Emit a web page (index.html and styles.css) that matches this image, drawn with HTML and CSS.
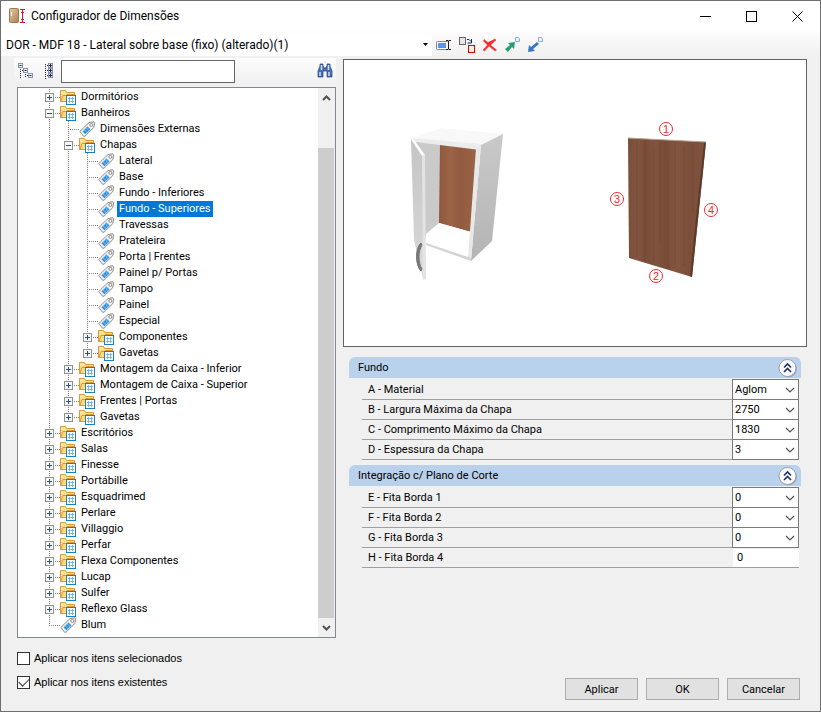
FILE: index.html
```html
<!DOCTYPE html>
<html lang="pt-BR">
<head>
    <meta charset="UTF-8">
    <meta name="viewport" content="width=device-width, initial-scale=1.0">
    <title>Configurador de Dimensões</title>
    <link rel="stylesheet" href="styles.css">
</head>
<body>
    <!-- shared icons -->
    <svg class="sprite" aria-hidden="true">
        <defs>
            <linearGradient id="folderFill" x1="0" y1="0" x2="0" y2="1">
                <stop offset="0" stop-color="#ffe9a8"/>
                <stop offset="1" stop-color="#f6c860"/>
            </linearGradient>
            <linearGradient id="panelFill" x1="0" y1="0" x2="1" y2="1">
                <stop offset="0" stop-color="#e6c9a2"/>
                <stop offset="1" stop-color="#a98256"/>
            </linearGradient>
        </defs>
        <symbol id="folder" viewBox="0 0 17 16">
            <path d="M.5 12.5v-11h5l1 2h8v9z" fill="url(#folderFill)" stroke="#d9993a"/>
            <path d="M1 12.5l2-6h3l1-1h8v7z" fill="#fddc86" stroke="#d9993a"/>
            <rect x="6.5" y="6.5" width="9" height="9" fill="#fff" stroke="#1b7fc0"/>
            <path d="M8 9.5h6M8 12.5h6M9.5 8v6M12.500 8v6" stroke="#7db9e2"/>
        </symbol>
        <symbol id="tag" viewBox="0 0 17 16">
            <path d="M.8 10.500L10 1.500l5-.7.7.8-.8 4.800L6 15.200H4.500z" fill="#f1f1f1" stroke="#8b8b8b"/>
            <path d="M3.500 10.500l5-5 3 3-5 4.800z" fill="#2f93dc"/>
            <path d="M5.500 9l3 3M7.500 7l3 3" stroke="#b9def8" stroke-width=".6"/>
            <circle cx="12.300" cy="3.900" r="1.500" fill="#fff" stroke="#8b8b8b"/>
        </symbol>
        <symbol id="plus" viewBox="0 0 9 9">
            <rect x=".5" y=".5" width="8" height="8" fill="#f8f8f8" stroke="#919191"/>
            <path d="M2 4.500h5M4.500 2v5" stroke="#2b4a9b"/>
        </symbol>
        <symbol id="minus" viewBox="0 0 9 9">
            <rect x=".5" y=".5" width="8" height="8" fill="#f8f8f8" stroke="#919191"/>
            <path d="M2 4.500h5" stroke="#2b4a9b"/>
        </symbol>
        <symbol id="chevron" viewBox="0 0 10 6">
            <path d="M1 1l4 4 4-4" fill="none" stroke="#555" stroke-width="1.200"/>
        </symbol>
        <symbol id="collapse" viewBox="0 0 20 20">
            <circle cx="10.500" cy="11" r="8.500" fill="#8b9ab2" opacity=".7"/>
            <circle cx="9.500" cy="10" r="8.500" fill="#fafafa" stroke="#98a2b5"/>
            <path d="M6 9.500L9.500 6 13 9.500M6 14l3.500-3.500L13 14" fill="none" stroke="#1f3364" stroke-width="1.600"/>
        </symbol>
    </svg>

    <div class="window">
        <header class="titlebar">
            <svg class="app-icon" viewBox="0 0 17 16">
                <rect x=".5" y=".5" width="9" height="14" rx="1" fill="url(#panelFill)" stroke="#9a7850"/>
                <path d="M2.500 4v4" stroke="#fff"/>
                <path d="M11 1.500h5M11 14.500h5M13.500 2v12M12 4.500h3M12 11.500h3" stroke="#dc143c" fill="none"/>
            </svg>
            <h1>Configurador de Dimensões</h1>
            <button class="win-btn" aria-label="Minimizar"><svg viewBox="0 0 11 11"><path d="M0 5.500h11"/></svg></button>
            <button class="win-btn" aria-label="Maximizar"><svg viewBox="0 0 11 11"><rect x=".5" y=".5" width="10" height="10"/></svg></button>
            <button class="win-btn" aria-label="Fechar"><svg viewBox="0 0 11 11"><path d="M.5.5l10 10M10.500.5l-10 10"/></svg></button>
        </header>

        <div class="toolbar">
            <div class="combo preset">
                <select aria-label="Configuração">
                    <option>DOR - MDF 18 - Lateral sobre base (fixo) (alterado)(1)</option>
                </select>
                <svg viewBox="0 0 5 3"><path d="M0 0h5L2.500 3z"/></svg>
            </div>
            <button class="tool" aria-label="Renomear">
                <svg viewBox="0 0 16 16">
                    <rect x=".5" y="4.500" width="12" height="8" rx="1" fill="#fff" stroke="#7387ad"/>
                    <rect x="2" y="6" width="8" height="5" fill="#5a94ea"/>
                    <path d="M10 3.500h2l.5.5.5-.5h2M10 12.500h2l.5-.5.5.5h2M12.500 4v8" fill="none" stroke="#222"/>
                </svg>
            </button>
            <button class="tool" aria-label="Substituir">
                <svg viewBox="0 0 16 16">
                    <rect x=".5" y=".5" width="6" height="7" fill="#e6e6e6" stroke="#6d5f66"/>
                    <path d="M8 2.500h2l2 2M12.500 2v4h-4" fill="none" stroke="#10246b"/>
                    <rect x="9.500" y="8.500" width="6" height="7" fill="#eee" stroke="#e00000"/>
                </svg>
            </button>
            <button class="tool" aria-label="Excluir">
                <svg viewBox="0 0 16 16"><path d="M2 2.500l4 3L13 2l1 1-5.500 5 6 5-1.500 1-6-5-4.500 5-1.500-1L5.500 8 1.500 4z" fill="#f62c2c" stroke="#f62c2c" stroke-width=".5"/></svg>
            </button>
            <button class="tool" aria-label="Exportar">
                <svg viewBox="0 0 16 16">
                    <path d="M0 12l5-4-2-2 7-1-1 7-2-2-4 5z" fill="#27a071"/>
                    <path d="M10.500.5h3l1 1v3h-4z" fill="#e9f2fb" stroke="#88aedb"/>
                </svg>
            </button>
            <button class="tool" aria-label="Importar">
                <svg viewBox="0 0 16 16">
                    <path d="M0 15l1-7 2 2 6-5 2 2-6 5 2 2z" fill="#3478c9"/>
                    <path d="M10.500.5h3l1 1v3h-4z" fill="#e9f2fb" stroke="#88aedb"/>
                </svg>
            </button>
        </div>

        <main class="main">
            <section class="browser">
                <div class="search-bar">
                    <button class="tool" aria-label="Recolher tudo">
                        <svg viewBox="0 0 16 16">
                            <path d="M2.500 4v12M7.500 9v6M4 7.500h2M9 12.500h2" stroke="#222" stroke-dasharray="1 1"/>
                            <g fill="#f4f4f4" stroke="#8294b1"><rect x=".5" y=".5" width="4" height="4"/><rect x="5.500" y="5.500" width="4" height="4"/><rect x="10.500" y="10.500" width="4" height="4"/></g>
                            <path d="M1.500 2.500h2M6.500 7.500h2M11.500 12.500h2" stroke="#222"/>
                        </svg>
                    </button>
                    <button class="tool" aria-label="Expandir tudo">
                        <svg viewBox="0 0 16 16">
                            <path d="M4.500 1v15M6 2.500h2M6 7.500h2M6 12.500h2" stroke="#222" stroke-dasharray="1 1"/>
                            <g fill="#f4f4f4" stroke="#8294b1"><rect x="7.500" y=".5" width="4" height="4"/><rect x="7.500" y="5.500" width="4" height="4"/><rect x="7.500" y="10.500" width="4" height="4"/></g>
                            <path d="M8 2.500h3M9.500 1v3M8 7.500h3M9.500 6v3M8 12.500h3M9.500 11v3" stroke="#222"/>
                        </svg>
                    </button>
                    <input type="text" class="search" aria-label="Pesquisar">
                    <button class="tool find" aria-label="Localizar">
                        <svg viewBox="0 0 16 16">
                            <path d="M3 1h3v2l1 1v1h2V4l1-1V1h3v2l2 5v6h-5V8H6v6H1V8l2-5z" fill="#456fae" stroke="#254477" stroke-width=".7"/>
                            <path d="M3 9v4M12 9v4M4.500 2v5M11.500 2v5" stroke="#c8dcf5" stroke-width="1.500"/>
                        </svg>
                    </button>
                </div>

                <div class="tree-box">
                    <ul class="tree">
                        <li><div class="row"><svg class="toggle"><use href="#plus"/></svg><svg class="icon"><use href="#folder"/></svg><span>Dormitórios</span></div></li>
                        <li>
                            <div class="row"><svg class="toggle"><use href="#minus"/></svg><svg class="icon"><use href="#folder"/></svg><span>Banheiros</span></div>
                            <ul>
                                <li><div class="row leaf"><svg class="icon"><use href="#tag"/></svg><span>Dimensões Externas</span></div></li>
                                <li>
                                    <div class="row"><svg class="toggle"><use href="#minus"/></svg><svg class="icon"><use href="#folder"/></svg><span>Chapas</span></div>
                                    <ul>
                                        <li><div class="row leaf"><svg class="icon"><use href="#tag"/></svg><span>Lateral</span></div></li>
                                        <li><div class="row leaf"><svg class="icon"><use href="#tag"/></svg><span>Base</span></div></li>
                                        <li><div class="row leaf"><svg class="icon"><use href="#tag"/></svg><span>Fundo - Inferiores</span></div></li>
                                        <li><div class="row leaf"><svg class="icon"><use href="#tag"/></svg><span class="selected">Fundo - Superiores</span></div></li>
                                        <li><div class="row leaf"><svg class="icon"><use href="#tag"/></svg><span>Travessas</span></div></li>
                                        <li><div class="row leaf"><svg class="icon"><use href="#tag"/></svg><span>Prateleira</span></div></li>
                                        <li><div class="row leaf"><svg class="icon"><use href="#tag"/></svg><span>Porta | Frentes</span></div></li>
                                        <li><div class="row leaf"><svg class="icon"><use href="#tag"/></svg><span>Painel p/ Portas</span></div></li>
                                        <li><div class="row leaf"><svg class="icon"><use href="#tag"/></svg><span>Tampo</span></div></li>
                                        <li><div class="row leaf"><svg class="icon"><use href="#tag"/></svg><span>Painel</span></div></li>
                                        <li><div class="row leaf"><svg class="icon"><use href="#tag"/></svg><span>Especial</span></div></li>
                                        <li><div class="row"><svg class="toggle"><use href="#plus"/></svg><svg class="icon"><use href="#folder"/></svg><span>Componentes</span></div></li>
                                        <li><div class="row"><svg class="toggle"><use href="#plus"/></svg><svg class="icon"><use href="#folder"/></svg><span>Gavetas</span></div></li>
                                    </ul>
                                </li>
                                <li><div class="row"><svg class="toggle"><use href="#plus"/></svg><svg class="icon"><use href="#folder"/></svg><span>Montagem da Caixa - Inferior</span></div></li>
                                <li><div class="row"><svg class="toggle"><use href="#plus"/></svg><svg class="icon"><use href="#folder"/></svg><span>Montagem de Caixa - Superior</span></div></li>
                                <li><div class="row"><svg class="toggle"><use href="#plus"/></svg><svg class="icon"><use href="#folder"/></svg><span>Frentes | Portas</span></div></li>
                                <li><div class="row"><svg class="toggle"><use href="#plus"/></svg><svg class="icon"><use href="#folder"/></svg><span>Gavetas</span></div></li>
                            </ul>
                        </li>
                        <li><div class="row"><svg class="toggle"><use href="#plus"/></svg><svg class="icon"><use href="#folder"/></svg><span>Escritórios</span></div></li>
                        <li><div class="row"><svg class="toggle"><use href="#plus"/></svg><svg class="icon"><use href="#folder"/></svg><span>Salas</span></div></li>
                        <li><div class="row"><svg class="toggle"><use href="#plus"/></svg><svg class="icon"><use href="#folder"/></svg><span>Finesse</span></div></li>
                        <li><div class="row"><svg class="toggle"><use href="#plus"/></svg><svg class="icon"><use href="#folder"/></svg><span>Portábille</span></div></li>
                        <li><div class="row"><svg class="toggle"><use href="#plus"/></svg><svg class="icon"><use href="#folder"/></svg><span>Esquadrimed</span></div></li>
                        <li><div class="row"><svg class="toggle"><use href="#plus"/></svg><svg class="icon"><use href="#folder"/></svg><span>Perlare</span></div></li>
                        <li><div class="row"><svg class="toggle"><use href="#plus"/></svg><svg class="icon"><use href="#folder"/></svg><span>Villaggio</span></div></li>
                        <li><div class="row"><svg class="toggle"><use href="#plus"/></svg><svg class="icon"><use href="#folder"/></svg><span>Perfar</span></div></li>
                        <li><div class="row"><svg class="toggle"><use href="#plus"/></svg><svg class="icon"><use href="#folder"/></svg><span>Flexa Componentes</span></div></li>
                        <li><div class="row"><svg class="toggle"><use href="#plus"/></svg><svg class="icon"><use href="#folder"/></svg><span>Lucap</span></div></li>
                        <li><div class="row"><svg class="toggle"><use href="#plus"/></svg><svg class="icon"><use href="#folder"/></svg><span>Sulfer</span></div></li>
                        <li><div class="row"><svg class="toggle"><use href="#plus"/></svg><svg class="icon"><use href="#folder"/></svg><span>Reflexo Glass</span></div></li>
                        <li><div class="row leaf"><svg class="icon"><use href="#tag"/></svg><span>Blum</span></div></li>
                    </ul>
                    <div class="scrollbar">
                        <svg viewBox="0 0 9 6"><path d="M1 5l3.500-3.500L8 5"/></svg>
                        <div class="thumb"></div>
                        <svg viewBox="0 0 9 6"><path d="M1 1l3.500 3.500L8 1"/></svg>
                    </div>
                </div>
            </section>

            <section class="details">
                <div class="preview">
                    <svg viewBox="344 60 462 286">
                        <defs>
                            <linearGradient id="wood">
                                <stop offset="0" stop-color="#7a4f3a"/>
                                <stop offset=".12" stop-color="#825641"/>
                                <stop offset=".22" stop-color="#794d38"/>
                                <stop offset=".36" stop-color="#80533e"/>
                                <stop offset=".48" stop-color="#784c36"/>
                                <stop offset=".62" stop-color="#835641"/>
                                <stop offset=".78" stop-color="#7b4f3a"/>
                                <stop offset="1" stop-color="#80533e"/>
                            </linearGradient>
                            <linearGradient id="back">
                                <stop offset="0" stop-color="#8f583d"/>
                                <stop offset=".3" stop-color="#9c6547"/>
                                <stop offset=".55" stop-color="#925b40"/>
                                <stop offset="1" stop-color="#9a6446"/>
                            </linearGradient>
                            <linearGradient id="side" x1="0" y1="0" x2="0" y2="1">
                                <stop offset="0" stop-color="#c9c9c9"/>
                                <stop offset="1" stop-color="#b4b4b4"/>
                            </linearGradient>
                            <linearGradient id="door" x1="0" y1="0" x2="0" y2="1">
                                <stop offset="0" stop-color="#c4c4c4"/>
                                <stop offset="1" stop-color="#dadada"/>
                            </linearGradient>
                        </defs>
                        <!-- cabinet -->
                        <path d="M412 138l29-10 62 6-22 11z" fill="#f8f8f8"/>
                        <path d="M481 145l22-11-11 107-21 20z" fill="url(#side)"/>
                        <path d="M416 141l24 1v82l-14 12-10 8z" fill="#cacaca"/>
                        <path d="M440 143l37 5-6 84-32-9z" fill="url(#back)"/>
                        <path d="M439 223l32 9-2 25-43-14v-9z" fill="#fff"/>
                        <path d="M412 138l69 6-1 6-64-8z" fill="#ececec"/>
                        <path d="M476 148l5-3-10 116-3-3z" fill="#e8e8e8"/>
                        <path d="M426 243l45 15v3l-45-16z" fill="#d3d3d3"/>
                        <path d="M411 139l11 17 1 123-9-39z" fill="url(#door)"/>
                        <path d="M411 139l3 1 11 15-3 1z" fill="#fff"/>
                        <path d="M422 156l3-1 1 124-3 1z" fill="#e3e3e3"/>
                        <path d="M421 243c-6 5-6 22 0 28l1-2c-4-6-4-18 0-24z" fill="#777" stroke="#777"/>
                        <!-- panel -->
                        <path d="M628 138l78 4-14 135-63-19z" fill="url(#wood)"/>
                        <path d="M704 142h2l-14 135-2-1z" fill="#5d3a2a"/>
                        <path d="M628 138l78 4" stroke="#b9a292"/>
                        <g stroke="#5f3826" stroke-width=".6" opacity=".4">
                            <path d="M637 140v118M645 140v122M654 150v112M660 142v100M668 160v108M675 142v126M684 146v120M693 144v70"/>
                        </g>
                        <g class="marks">
                            <circle cx="666" cy="129" r="6.500"/><text x="666" y="133">1</text>
                            <circle cx="656" cy="276" r="6.500"/><text x="656" y="280">2</text>
                            <circle cx="617" cy="199" r="6.500"/><text x="617" y="203">3</text>
                            <circle cx="711" cy="210" r="6.500"/><text x="711" y="214">4</text>
                        </g>
                    </svg>
                </div>

                <div class="group">
                    <div class="group-head">
                        <h2>Fundo</h2>
                        <button aria-label="Recolher Fundo"><svg><use href="#collapse"/></svg></button>
                    </div>
                    <div class="field">
                        <label for="material">A - Material</label>
                        <div class="combo"><select id="material"><option>Aglom</option></select><svg><use href="#chevron"/></svg></div>
                    </div>
                    <div class="field">
                        <label for="largura">B - Largura Máxima da Chapa</label>
                        <div class="combo"><select id="largura"><option>2750</option></select><svg><use href="#chevron"/></svg></div>
                    </div>
                    <div class="field">
                        <label for="comprimento">C - Comprimento Máximo da Chapa</label>
                        <div class="combo"><select id="comprimento"><option>1830</option></select><svg><use href="#chevron"/></svg></div>
                    </div>
                    <div class="field">
                        <label for="espessura">D - Espessura da Chapa</label>
                        <div class="combo"><select id="espessura"><option>3</option></select><svg><use href="#chevron"/></svg></div>
                    </div>
                </div>

                <div class="group">
                    <div class="group-head">
                        <h2>Integração c/ Plano de Corte</h2>
                        <button aria-label="Recolher Integração"><svg><use href="#collapse"/></svg></button>
                    </div>
                    <div class="field">
                        <label for="fita1">E - Fita Borda 1</label>
                        <div class="combo"><select id="fita1"><option>0</option></select><svg><use href="#chevron"/></svg></div>
                    </div>
                    <div class="field">
                        <label for="fita2">F - Fita Borda 2</label>
                        <div class="combo"><select id="fita2"><option>0</option></select><svg><use href="#chevron"/></svg></div>
                    </div>
                    <div class="field">
                        <label for="fita3">G - Fita Borda 3</label>
                        <div class="combo"><select id="fita3"><option>0</option></select><svg><use href="#chevron"/></svg></div>
                    </div>
                    <div class="field">
                        <label for="fita4">H - Fita Borda 4</label>
                        <input type="text" id="fita4" value="0">
                    </div>
                </div>
            </section>
        </main>

        <footer class="footer">
            <div class="checks">
                <label><input type="checkbox"> Aplicar nos itens selecionados</label>
                <label><input type="checkbox" checked> Aplicar nos itens existentes</label>
            </div>
            <div class="actions">
                <button class="btn">Aplicar</button>
                <button class="btn">OK</button>
                <button class="btn">Cancelar</button>
            </div>
        </footer>
    </div>
</body>
</html>
```

FILE: styles.css
```css
* {
    margin: 0;
    padding: 0;
    box-sizing: border-box;
}
body {
    font-family: Roboto, Arial, sans-serif;
    font-size: 11px;
    color: #000;
    background-color: #f0f0f0;
}
button, input, select {
    font: inherit;
    color: inherit;
    border: 0;
    border-radius: 0;
    background: none;
}
svg {
    display: block;
}
.sprite {
    position: absolute;
    width: 0;
    height: 0;
}
.window {
    min-height: 100vh;
    display: flex;
    flex-direction: column;
    border: 1px solid #6e6e6e;
}

/* title bar */
.titlebar {
    display: flex;
    align-items: center;
    height: 30px;
    padding-left: 8px;
    background-color: #fff;
}
.app-icon {
    width: 17px;
    height: 16px;
}
.titlebar h1 {
    flex: 1;
    margin-left: 5px;
    font-size: 12px;
    font-weight: normal;
}
.win-btn {
    width: 46px;
    height: 30px;
    display: grid;
    place-items: center;
}
.win-btn svg {
    width: 11px;
    height: 11px;
    fill: none;
    stroke: #000;
}

/* toolbar */
.toolbar {
    display: flex;
    align-items: center;
    height: 27px;
    background-image: linear-gradient(#fdfdfd, #f0f0f0);
}
.tool {
    width: 23px;
    height: 23px;
    display: grid;
    place-items: center;
}
.tool svg {
    width: 16px;
    height: 16px;
}
.combo {
    display: grid;
    align-items: center;
    background-color: #fff;
}
.combo select, .combo svg {
    grid-area: 1 / 1;
}
.combo select {
    width: 100%;
    height: 100%;
    appearance: none;
}
.combo svg {
    justify-self: end;
    pointer-events: none;
}
.preset {
    width: 431px;
    height: 23px;
}
.preset select {
    padding-left: 5px;
    font-size: 12px;
}
.preset svg {
    width: 5px;
    height: 3px;
    margin-right: 4px;
}

/* main area */
.main {
    flex: 1;
    display: grid;
    grid-template-columns: 322px 1fr;
    gap: 7px;
    padding: 0 13px;
}
.browser {
    display: flex;
    flex-direction: column;
}
.search-bar {
    display: flex;
    align-items: center;
    height: 26px;
    margin-bottom: 3px;
    background-image: linear-gradient(#fdfdfd, #f0f0f0);
}
.search {
    width: 174px;
    height: 23px;
    margin-left: 1px;
    padding: 0 4px;
    border: 1px solid #646464;
    background-color: #fff;
}
.find {
    margin-left: auto;
}
.tree-box {
    flex: 1;
    display: flex;
    margin-left: 3px;
    border: 1px solid #828790;
    background-color: #fff;
}
.tree {
    flex: 1;
    padding: 1px 0 0 27px;
}
.tree, .tree ul {
    list-style: none;
}
.tree ul {
    padding-left: 19px;
}
.tree li {
    background: linear-gradient(#808080 50%, transparent 50%) 4px 0 / 1px 2px repeat-y;
}
/* the branch line stops at the last item */
.tree li:last-child {
    background:
        linear-gradient(#fff, #fff) 4px 9px / 1px 100% no-repeat,
        linear-gradient(#808080 50%, transparent 50%) 4px 0 / 1px 2px repeat-y;
}
.row {
    display: flex;
    align-items: center;
    height: 16px;
    background: linear-gradient(90deg, #808080 50%, transparent 50%) 4px 8px / 2px 1px repeat-x content-box;
}
.row .toggle {
    width: 9px;
    height: 9px;
    margin-right: 6px;
}
.row.leaf {
    padding-left: 4px;
}
.leaf .icon {
    margin-left: 11px;
}
/* the white edge hides the dotted line next to the label */
.icon {
    width: 19px;
    height: 16px;
    border-right: 2px solid #fff;
    background-color: #fff;
}
.row span {
    flex: 1;
    padding: 0 2px;
    line-height: 16px;
    background-color: #fff;
}
.row .selected {
    flex: none;
    color: #fff;
    background-color: #0078d7;
}
.row:has(.selected) {
    width: fit-content;
}
.scrollbar {
    width: 17px;
    display: flex;
    flex-direction: column;
    align-items: center;
    justify-content: space-between;
    padding: 7px 1px 6px 0;
    background-color: #f0f0f0;
}
.scrollbar svg {
    width: 9px;
    height: 6px;
    fill: none;
    stroke: #505050;
    stroke-width: 2;
}
.thumb {
    width: 100%;
    flex: 1;
    margin: 47px 0 7px;
    background-color: #cdcdcd;
}

/* preview and properties */
.preview {
    margin-top: 1px;
    border: 1px solid #646464;
    background-color: #fff;
}
.preview svg {
    width: 100%;
}
.marks circle {
    fill: #fff;
    stroke: #ee2a2a;
}
.marks text {
    fill: #ee2a2a;
    font-family: "Liberation Sans", Arial, sans-serif;
    font-size: 11px;
    text-anchor: middle;
}
.details {
    padding-bottom: 10px;
}
.group {
    margin: 5px 6px 0;
}
.preview + .group {
    margin-top: 10px;
}
.group-head {
    display: flex;
    align-items: center;
    justify-content: space-between;
    height: 21px;
    margin-bottom: 2px;
    padding: 0 3px 0 9px;
    border-radius: 6px 6px 0 0;
    background-color: #b9d1ea;
}
.group-head h2 {
    font-size: 11px;
    font-weight: normal;
}
.group-head button, .group-head svg {
    width: 20px;
    height: 20px;
}
.field {
    display: flex;
    align-items: center;
    height: 20px;
    margin: 0 2px 0 13px;
    border-bottom: 1px solid #a0a0a0;
}
.field label {
    flex: 1;
    padding-left: 6px;
}
.field .combo {
    width: 67px;
    height: 21px;
    border: 1px solid #7a7a7a;
}
.field select {
    padding-left: 2px;
}
.field .combo svg {
    width: 10px;
    height: 6px;
    margin-right: 3px;
}
.field input {
    width: 66px;
    height: 18px;
    padding-left: 4px;
    background-color: #fff;
}

/* footer */
.footer {
    display: flex;
    justify-content: space-between;
    align-items: flex-end;
    padding: 8px 20px 11px 16px;
}
.checks {
    margin-bottom: 6px;
}
.checks label {
    display: flex;
    align-items: center;
    gap: 4px;
    height: 24px;
    font-family: "Liberation Sans", Arial, sans-serif;
}
.checks input {
    width: 13px;
    height: 13px;
    display: grid;
    place-items: center;
    appearance: none;
    border: 1px solid #333;
    background-color: #fff;
}
.checks input:checked::before {
    content: "";
    width: 9px;
    height: 5px;
    margin-top: -3px;
    border: solid #333;
    border-width: 0 0 1px 1px;
    transform: rotate(-45deg);
}
.actions {
    display: flex;
    gap: 8px;
}
.btn {
    width: 73px;
    height: 22px;
    border: 1px solid #adadad;
    background-color: #e1e1e1;
}
```
